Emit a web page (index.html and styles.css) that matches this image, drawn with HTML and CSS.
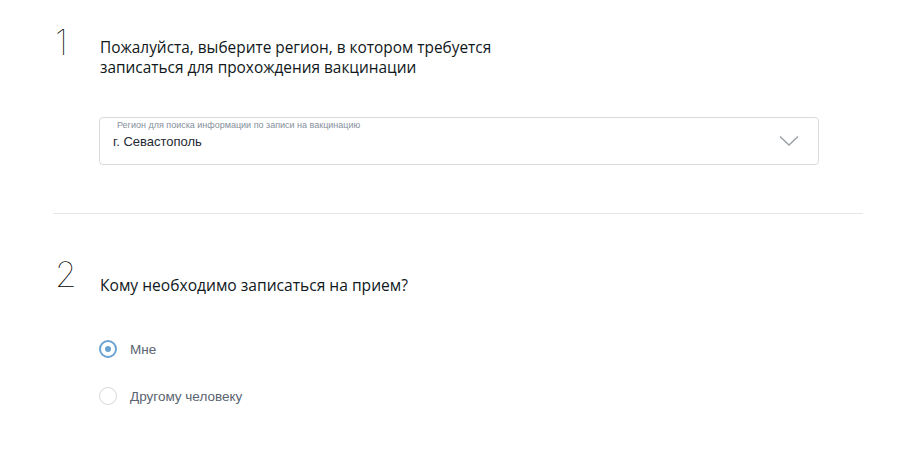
FILE: index.html
```html
<!DOCTYPE html>
<html lang="ru">
<head>
<meta charset="utf-8">
<link rel="stylesheet" href="styles.css">
</head>
<body>
<main class="page">
  <section class="step step-one">
    <div class="num">1</div>
    <div class="body">
      <h2 class="title">Пожалуйста, выберите регион, в котором требуется<br>записаться для прохождения вакцинации</h2>
      <div class="select">
        <div class="select-text">
          <span class="select-label">Регион для поиска информации по записи на вакцинацию</span>
          <span class="select-value">г. Севастополь</span>
        </div>
        <svg class="chev" width="20" height="12" viewBox="0 0 20 12"><path d="M1 1.5 L10 10 L19 1.5" fill="none" stroke="#9aa0a6" stroke-width="1.4"/></svg>
      </div>
    </div>
  </section>
  <hr class="sep">
  <section class="step step-two">
    <div class="num">2</div>
    <div class="body">
      <h2 class="title">Кому необходимо записаться на прием?</h2>
      <div class="radios">
        <label class="radio"><span class="dot checked"></span><span class="rlabel">Мне</span></label>
        <label class="radio"><span class="dot"></span><span class="rlabel">Другому человеку</span></label>
      </div>
    </div>
  </section>
</main>
</body>
</html>
```
FILE: styles.css
```css
html, body { margin: 0; padding: 0; background: #fff; }
.page { margin-left: 53px; width: 810px; }
.step { display: flex; }
.num {
  width: 46px;
  flex: none;
  font-family: Inter, "Open Sans", sans-serif;
  font-weight: 100;
  font-size: 35px;
  line-height: 36px;
  color: #000;
  padding-left: 2px;
  box-sizing: border-box;
}
.body { flex: 1; }
.title {
  margin: 0;
  font-family: "Open Sans", sans-serif;
  font-weight: 400;
  font-size: 15.4px;
  line-height: 20px;
  color: #101820;
  padding-left: 1px;
}
.step-one { padding-top: 24px; }
.step-one .title { margin-top: 14px; }
.select {
  margin-top: 39px;
  width: 720px;
  height: 48px;
  box-sizing: border-box;
  border: 1px solid #d9dadc;
  border-radius: 4px;
  display: flex;
  align-items: center;
  justify-content: space-between;
  padding: 0 19px 0 13px;
}
.select-text { display: flex; flex-direction: column; align-self: flex-start; padding-top: 1px; }
.select-label {
  font-family: "Liberation Sans", Arial, sans-serif;
  font-size: 9px;
  line-height: 12px;
  color: #86909c;
  padding-left: 4px;
}
.select-value {
  font-family: "Liberation Sans", Arial, sans-serif;
  font-size: 13px;
  line-height: 18px;
  color: #1f2a35;
  margin-top: 2px;
}
.chev { display: block; }
.sep { margin: 48px 0 0; border: 0; border-top: 1px solid #e3e7ec; height: 0; }
.step-two { padding-top: 42px; }
.step-two .title { margin-top: 19px; font-size: 15.6px; }
.radios { margin-top: 45px; display: flex; flex-direction: column; gap: 29px; }
.radio { display: flex; align-items: center; height: 18px; cursor: pointer; }
.dot {
  width: 18px; height: 18px; box-sizing: border-box;
  border: 1px solid #d5d8dc; border-radius: 50%;
  position: relative; flex: none;
}
.dot.checked { border: 2px solid #6aa3d2; }
.dot.checked::after {
  content: ""; position: absolute; left: 50%; top: 50%;
  width: 6px; height: 6px; margin: -3px 0 0 -3px;
  border-radius: 50%; background: #6aa3d2;
}
.rlabel {
  margin-left: 13px;
  font-family: "Liberation Sans", Arial, sans-serif;
  font-size: 13.5px;
  color: #5a6470;
}
```
